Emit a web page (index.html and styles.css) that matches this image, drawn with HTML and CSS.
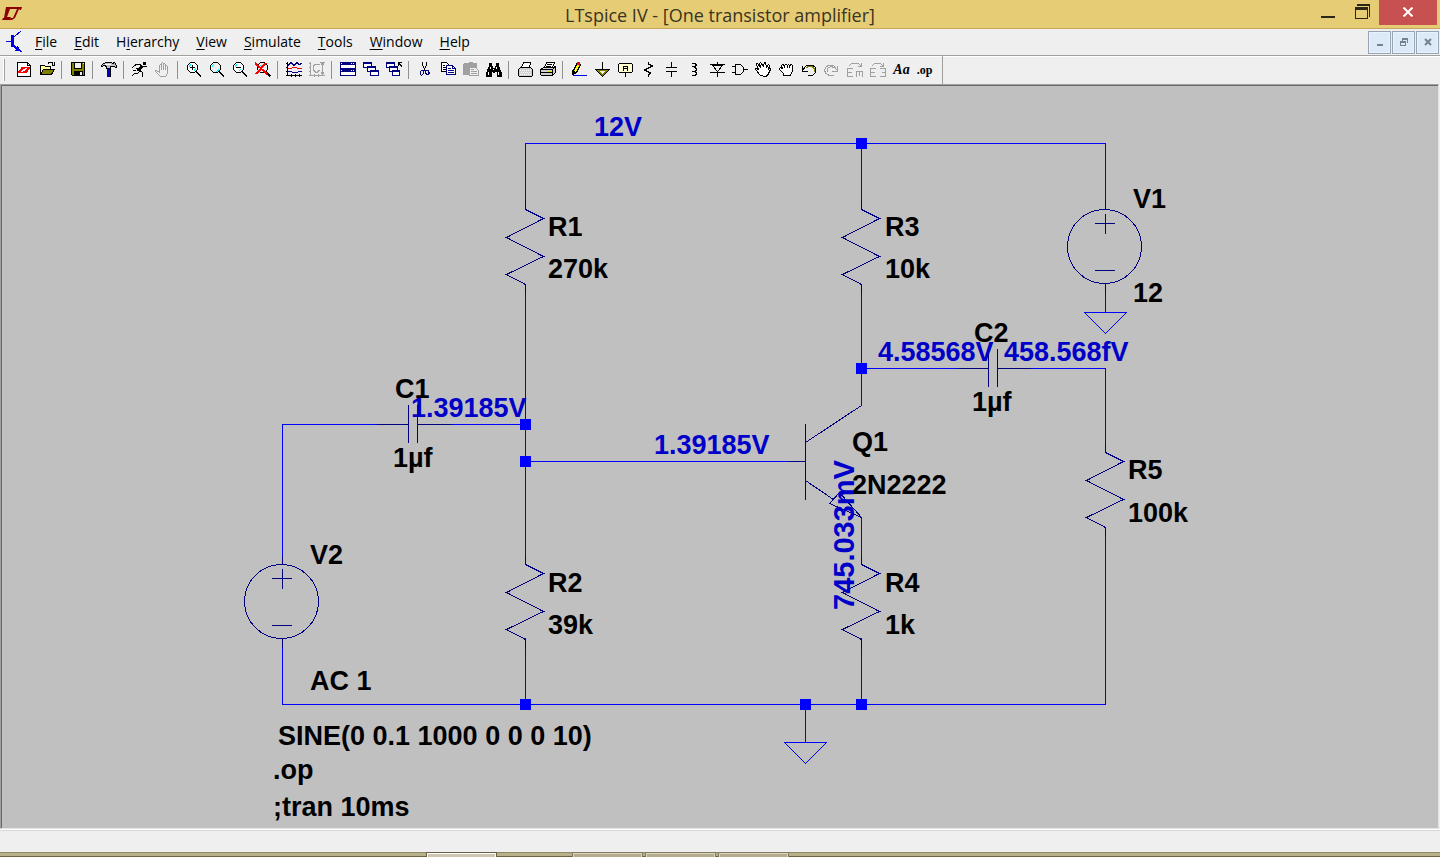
FILE: index.html
```html
<!DOCTYPE html>
<html lang="en">
<head>
<meta charset="utf-8">
<title>LTspice IV - [One transistor amplifier]</title>
<link rel="stylesheet" href="styles.css">
</head>
<body>
<div class="window">
  <header class="titlebar">
    <svg class="app-logo" width="20" height="13" viewBox="0 0 20 13"><path fill="#8b0000" d="M4 0h8l-1 2H8L5 10h4l-1 3H0l1-2h1zM12 0h8l-1 3h-1l-1-1-4 9-3 2H8l1-2h2l4-9h-4z"/></svg>
    <h1 class="title">LTspice IV - [One transistor amplifier]</h1>
    <div class="window-controls">
      <button class="win-btn" aria-label="Minimize"><svg class="crisp" width="14" height="16" viewBox="0 0 14 16"><path fill="#2a2618" d="M0 12h14v2H0z"/></svg></button>
      <button class="win-btn" aria-label="Restore"><svg class="crisp" width="15" height="16" viewBox="0 0 15 16"><path fill="#2a2618" d="M2 0h13v13h-1V2H2zM0 3h13v12H0zM1 6v8h11V6z" fill-rule="evenodd"/></svg></button>
      <button class="win-btn close" aria-label="Close"><svg width="12" height="10" viewBox="0 0 12 10"><path stroke="#fff" stroke-width="2" d="M1.500.5l9 9M10.500.5l-9 9"/></svg></button>
    </div>
  </header>

  <nav class="menubar">
    <svg class="doc-icon crisp" width="16" height="22" viewBox="0 0 16 22"><path fill="none" stroke="#0000e0" d="M0 10.500h6M8 6l7-6"/><path fill="#0000e0" d="M5 4h3v12H5zM7 13l4 3 1-2 1 3 3 4-5-1-2 0 1-2-3-2z"/></svg>
    <button class="menu"><u>F</u>ile</button>
    <button class="menu"><u>E</u>dit</button>
    <button class="menu">H<u>i</u>erarchy</button>
    <button class="menu"><u>V</u>iew</button>
    <button class="menu"><u>S</u>imulate</button>
    <button class="menu"><u>T</u>ools</button>
    <button class="menu"><u>W</u>indow</button>
    <button class="menu"><u>H</u>elp</button>
    <div class="doc-controls">
      <button class="doc-btn" aria-label="Minimize document"><svg class="crisp" width="8" height="9" viewBox="0 0 8 9"><path fill="#74828f" d="M1 6h6v2H1z"/></svg></button>
      <button class="doc-btn" aria-label="Restore document"><svg class="crisp" width="8" height="9" viewBox="0 0 8 9"><path fill="#74828f" fill-rule="evenodd" d="M2 0h6v5H7V2H3v1H2zM0 3h6v5H0zM1 5v2h4V5z"/></svg></button>
      <button class="doc-btn" aria-label="Close document"><svg width="8" height="9" viewBox="0 0 8 9"><path stroke="#74828f" stroke-width="2" d="M1 1l6 6M7 1L1 7"/></svg></button>
    </div>
  </nav>

  <div class="toolbar" role="toolbar" aria-label="Schematic tools">
    <span class="grip"></span>
    <div class="group">
      <button class="tool" aria-label="New schematic"><svg viewBox="0 0 16 16"><path fill="#fff" stroke="#000" d="M1.500.5h10l3 3v11h-13z"/><path fill="none" stroke="#000" d="M11.500.5v3h3"/><path fill="#f00" d="M5 5h4v2H7l-2 3h2v1H2V9h1l2-3zM9 5h5v2h-1l-2 4H7V9h2l2-3H9z"/></svg></button>
      <button class="tool" aria-label="Open"><svg viewBox="0 0 16 16"><path fill="#ff9" stroke="#000" d="M1.500 12.500v-9h4l1 1h5v3h-6z"/><path fill="#808000" stroke="#000" d="M1.500 12.500l3-5h11l-3 5z"/><path fill="none" stroke="#000" d="M9 1.500l1-1h3l1 2M15.500 0v3h-3"/></svg></button>
    </div>
    <span class="sep"></span>
    <div class="group">
      <button class="tool" aria-label="Save"><svg viewBox="0 0 16 16"><path fill="#808000" stroke="#000" d="M1.500.5h13v13h-12l-1-1z"/><path fill="#efefef" stroke="#000" d="M4.500.5h7v6h-7z"/><path d="M4 9h9v5H4z"/><path fill="#efefef" d="M10 10h2v3h-2zM13 1h1v1h-1z"/></svg></button>
    </div>
    <span class="sep"></span>
    <div class="group">
      <button class="tool" aria-label="Control panel"><svg viewBox="0 0 16 16"><path fill="#c0c0c0" stroke="#000" d="M.5 3.500l2-2 3-1h5l1 1 2-1 2 3v2l-3-1h-3v2h-4v-2l-2-1-3 1z"/><path fill="#fff" d="M4 2h6v1H4z"/><path fill="#0000c0" d="M6 7h4v8H6z"/><path d="M9 7h1v8H9z"/></svg></button>
    </div>
    <span class="sep"></span>
    <div class="group">
      <button class="tool" aria-label="Run"><svg viewBox="0 0 16 16"><path d="M11 0h3v3h-3z"/><path fill="none" stroke="#000" d="M3 3.500l1-1h4l3 2 3-.5h1M0 5.500l3-2M0 14l3-3h3l3-3M7 8l3 2v4h1M1 8.500h3M4 6.500h2"/><path stroke="#000" stroke-width="3" d="M10 4L6 9"/></svg></button>
      <button class="tool" aria-label="Halt" disabled><svg viewBox="0 0 16 16"><path fill="#efefef" stroke="#a0a0a0" d="M5.500 14.500l-5-5v-1h1l3 2v-7l1-1 1 1v-2l1-1 1 1v1l1-1 1 1v2l1-1 1 1v7l-2 3zM6.500 3v5M8.500 2v6M10.500 4v4"/></svg></button>
    </div>
    <span class="sep"></span>
    <div class="group">
      <button class="tool" aria-label="Zoom in"><svg viewBox="0 0 16 16"><path fill="#fff" stroke="#000" d="M4.500.5h4l3 3v4l-3 3h-4l-3-3v-4z"/><path fill="none" stroke="#0ff" d="M3 4.500l2-2M8 8.500l2-2"/><path fill="none" stroke="#000" d="M4 5.500h5M6.500 3v5"/><path stroke="#000" stroke-width="2" d="M10 9.500l5 5"/></svg></button>
      <button class="tool" aria-label="Pan"><svg viewBox="0 0 16 16"><path fill="#efefef" stroke="#000" d="M4.500.5h4l3 3v4l-3 3h-4l-3-3v-4z"/><path fill="none" stroke="#0ff" d="M3.500 5V3.500L5 2.500M7 9.500l2-1V7"/><path stroke="#000" stroke-width="2" d="M10 9.500l5 5"/></svg></button>
      <button class="tool" aria-label="Zoom out"><svg viewBox="0 0 16 16"><path fill="#fff" stroke="#000" d="M4.500.5h4l3 3v4l-3 3h-4l-3-3v-4z"/><path fill="none" stroke="#0ff" d="M3 4.500l2-2M7 8.500l2-1"/><path fill="none" stroke="#000" d="M4 5.500h5"/><path stroke="#000" stroke-width="2" d="M10 9.500l5 5"/></svg></button>
      <button class="tool" aria-label="Zoom to fit"><svg viewBox="0 0 16 16"><path fill="#efefef" stroke="#000" d="M5.500.5h4l3 3v4l-3 3h-4l-3-3v-4z"/><path fill="none" stroke="#0ff" d="M5 3.500h3M8 8.500h2"/><path stroke="#000" stroke-width="2" d="M10.500 9.500l5 5"/><path fill="none" stroke="#f00" stroke-width="2" d="M0 1l12 11M11 1L1 12"/></svg></button>
    </div>
    <span class="sep"></span>
    <div class="group">
      <button class="tool" aria-label="Autorange"><svg viewBox="0 0 16 16"><path fill="none" stroke="#000" d="M1.500 0v14M0 13.500h16M0 1.500h2M0 5.500h2M0 9.500h2M5.500 12v3M9.500 12v3M13.500 12v3"/><path fill="none" stroke="#000080" d="M2 3.500l3-3 3 3 3-3 2 2 3-1M2 9.500h3l2 1h4l2-1h3"/><path fill="none" stroke="#f00" d="M2 6.500h3l2-1h3l2 1h4"/></svg></button>
      <button class="tool" aria-label="Plot settings" disabled><svg viewBox="0 0 16 16"><path fill="none" stroke="#a0a0a0" d="M1.500 0v14M0 13.500h16M0 1.500h2M0 5.500h2M0 9.500h2M5.500 12v3M9.500 12v3M13.500 0v12M12 2.500l1.500-2 1.500 2M12 10.500l1.500 2 1.500-2M11 .5h5M10.500 3l-2-1h-2l-2 2v4l2 2h2l2-2"/></svg></button>
    </div>
    <span class="sep"></span>
    <div class="group">
      <button class="tool" aria-label="Tile windows"><svg viewBox="0 0 16 16"><path fill="#fff" stroke="#000080" d="M.5.5h15v6H.5zM.5 7.500h15v6H.5z"/><path fill="#000080" d="M0 0h16v3H0zM0 7h16v3H0z"/><path fill="#fff" d="M1 1h1v1H1zM11 1h1v1h-1zM13 1h1v1h-1zM1 8h1v1H1zM11 8h1v1h-1zM13 8h1v1h-1z"/></svg></button>
      <button class="tool" aria-label="Cascade windows"><svg viewBox="0 0 16 16"><g fill="#fff" stroke="#000080"><path d="M.5.5h8v5h-8z"/><path d="M4.500 4.500h8v5h-8z"/><path d="M7.500 8.500h8v5h-8z"/></g><path fill="#000080" d="M0 0h9v2H0zM4 4h9v2H4zM7 8h9v2H7z"/></svg></button>
      <button class="tool" aria-label="Close all windows"><svg viewBox="0 0 16 16"><g fill="#fff" stroke="#000080"><path d="M.5.5h8v5h-8z"/><path d="M3.500 4.500h8v5h-8z"/><path d="M6.500 8.500h7v5h-7z"/></g><path fill="#000080" d="M0 0h9v2H0zM3 4h9v2H3zM6 8h8v2H6z"/><path fill="none" stroke="#000" d="M12.500 4V.5H16M13 1l3 4"/></svg></button>
    </div>
    <span class="sep"></span>
    <div class="group">
      <button class="tool" aria-label="Cut"><svg viewBox="0 0 16 16"><path fill="none" stroke="#000" d="M5.500 0v3l3 6M9.500 0v3l-3 6"/><path fill="none" stroke="#000080" d="M7 8.500l-1-.5-2 1-1 1v2l1 1h1l1-1zM8 8.500l1 0 2 0 1 2v1l-1 1h-1l-1-1z"/></svg></button>
      <button class="tool" aria-label="Copy"><svg viewBox="0 0 16 16"><path fill="#fff" stroke="#000" d="M1.500.5h5l2 2v7h-7z"/><path stroke="#000" d="M3 3.500h2M3 5.500h4M3 7.500h4"/><path fill="#fff" stroke="#000080" d="M6.500 3.500h6l3 3v6h-9z"/><path fill="none" stroke="#000080" d="M12.500 3.500v3h3M8 6.500h3M8 8.500h6M8 10.500h6"/></svg></button>
      <button class="tool" aria-label="Paste" disabled><svg viewBox="0 0 16 16"><path fill="#a0a0a0" d="M1 1h4l1-1h3l1 1h4v5H6v7H0V2z"/><path fill="#efefef" stroke="#a0a0a0" d="M6.500 5.500h6l3 3v5h-9z"/><path stroke="#a0a0a0" d="M8 7.500h3M8 9.500h6M8 11.500h6"/></svg></button>
      <button class="tool" aria-label="Find"><svg viewBox="0 0 16 16"><path d="M3 1h3v3h1v2h2V4h1V1h3v3l1 2 1 3 1 2v4h-5v-5H9v1H7v-1H6v5H0v-4l1-2 1-3 1-2z"/><path fill="#fff" d="M4 5h1v2H4zM10 5h1v2h-1zM2 10h1v3H2zM12 10h1v3h-1zM7 7h1v1H7z"/></svg></button>
    </div>
    <span class="sep"></span>
    <div class="group">
      <button class="tool" aria-label="Print setup"><svg viewBox="0 0 16 16"><path fill="#fff" stroke="#000" d="M4.500 5.500l2-5h7l-1 5"/><path fill="#d0d0d0" stroke="#000" d="M1.500 7.500l2-2h10l2 2v6l-1 1h-12l-1-1z"/><path stroke="#fff" stroke-dasharray="1 1" d="M3 8.500h11M4 10.500h10M3 12.500h11"/></svg></button>
      <button class="tool" aria-label="Print"><svg viewBox="0 0 16 16"><path fill="#fff" stroke="#000" d="M4.500 5.500l2-5h8l-2 5"/><path fill="none" stroke="#000" d="M7 2.500h5M6 4.500h5"/><path fill="#d0d0d0" stroke="#000" d="M.5 7.500l3-2h10l2-1v6l-3 3h-11l-1-1z"/><path fill="none" stroke="#000" d="M1 7.500h11l3-2M1 10.500h12M12.500 8v5"/><path stroke="#e0e000" d="M7 9.500h4"/></svg></button>
    </div>
    <span class="sep"></span>
    <div class="group">
      <button class="tool" aria-label="Draw wire"><svg viewBox="0 0 16 16"><path fill="#ff0" stroke="#000" d="M2.500 8.500l4-8 3 2-4 8-3 2z"/><path fill="#f00" d="M6 0h3v4L6 3z"/><path d="M1 8l4 2-3 3H1z"/><path stroke="#00f" d="M2 13.500h14"/></svg></button>
      <button class="tool" aria-label="Ground"><svg viewBox="0 0 16 16"><path fill="none" stroke="#000" d="M8.500 0v8"/><path fill="#efefef" stroke="#808000" stroke-width="2" d="M3 8h11l-5.500 5z"/><path fill="none" stroke="#000" d="M1 7.500h15M2 8l6.500 6.500L15 8"/></svg></button>
      <button class="tool" aria-label="Label net"><svg viewBox="0 0 16 16"><path fill="#ffffd0" stroke="#000" d="M2.500 1.500h12l1 1v7l-1 1h-12l-1-1v-7z"/><path fill="none" stroke="#000" d="M8.500 11v4M6.500 9V5l1-1h2l1 1v4M7 6.500h4"/></svg></button>
      <button class="tool" aria-label="Resistor"><svg viewBox="0 0 16 16"><path fill="none" stroke="#000" d="M8.500 0v2l4 2-8 4 6 3-2 2v2"/></svg></button>
      <button class="tool" aria-label="Capacitor"><svg viewBox="0 0 16 16"><path fill="none" stroke="#000" d="M8.500 0v5M8.500 9v6M3 5.500h11M3 9.500h11"/></svg></button>
      <button class="tool" aria-label="Inductor"><svg viewBox="0 0 16 16"><path fill="none" stroke="#000" d="M6 1.500h3l1 1v1l-1 1H6M8 5.500h1l1 1v2l-1 1H6M9 9.500l1 1v2l-1 1H6"/></svg></button>
      <button class="tool" aria-label="Diode"><svg viewBox="0 0 16 16"><path fill="none" stroke="#000" d="M8.500 0v15M1 2.500h15M1 10.500h15"/><path fill="#efefef" stroke="#000" d="M3.500 3l5 7 5-7z"/></svg></button>
      <button class="tool" aria-label="Component"><svg viewBox="0 0 16 16"><path fill="#efefef" stroke="#000" d="M3.500 2.500h5l3 3v4l-3 3h-5z"/><path stroke="#000" d="M0 4.500h3M0 10.500h3M12 7.500h4"/></svg></button>
      <button class="tool" aria-label="Move"><svg viewBox="0 0 16 16"><path fill="#fff" stroke="#000" d="M5.500 13.500l-5-6v-1h1l2 1-2-5v-1h1l3 4-1-4 1-1 3 4 1-4h1l1 5 2-3 1 1-1 4 1-1h1v1l-3 6-2 1z"/></svg></button>
      <button class="tool" aria-label="Drag"><svg viewBox="0 0 16 16"><path fill="#fff" stroke="#000" d="M5.500 13.500v-2l-4-4v-1l1-1 2 1-1-3 1-1 2 1 1-1h1l1 1 1-1 1 1 2-1 1 1v6l-2 3v1z"/><path fill="none" stroke="#000" d="M6.500 3v3M9.500 3v3M11.500 4v2"/></svg></button>
      <button class="tool" aria-label="Undo"><svg viewBox="0 0 16 16"><path fill="none" stroke="#000" d="M1.500 4v5H7M2 8l3-4 2-1h4l3 2 1 3-1 3-2 2H7"/><path fill="none" stroke="#808000" d="M5 5.500l3-1h3l2 2v3"/></svg></button>
      <button class="tool" aria-label="Redo" disabled><svg viewBox="0 0 16 16"><path fill="none" stroke="#a0a0a0" d="M13.500 4v5H8M13 8l-3-4-2-1H5L2 5 .5 8l1 3 3 2h5M10 5.500l-3-1-4 2v3"/></svg></button>
      <button class="tool" aria-label="Rotate" disabled><svg viewBox="0 0 16 16"><path fill="none" stroke="#a0a0a0" d="M6 6.500H.5v8H6M1 10.500h4M9.500 15v-5.500h6V15M12.500 10v4M2 4l3-3h6l3 3M14.500 1v3.500H11"/></svg></button>
      <button class="tool" aria-label="Mirror" disabled><svg viewBox="0 0 16 16"><path fill="none" stroke="#a0a0a0" d="M6 6.500H.5v8H6M1 10.500h4M10 6.500h5.500v8H10M12 10.500h3M2 4l3-3h5l3 3M13.500 1v3.500H10"/></svg></button>
      <button class="tool text-tool comment" aria-label="Text">Aa</button>
      <button class="tool text-tool" aria-label="SPICE directive">.op</button>
    </div>
    <span class="end-sep"></span>
  </div>

  <main class="canvas">
    <svg class="schematic" viewBox="2 86 1436 742" preserveAspectRatio="xMinYMin meet">
      <defs>
        <path id="resistor" d="M0-9V0L18 9-19 28 18 47-19 65 0 75V84"/>
        <path id="capacitor" d="M-36.500 0H-4.500M-4.500-20V18M4.500-20V18M4.500 0H37.500"/>
        <g id="source"><circle cx="-1" cy="37" r="37"/><path d="M0-9V0M0 74V83M-11 14H9M0 4V24M-11 60.500H9"/></g>
        <path id="ground" d="M-21 0H21L0 21Z"/>
      </defs>
      <g class="wires">
        <path d="M525.500 209V143.500H1105.500V209M861.500 143V209M861.500 284V406M861.500 368.500H989M998 368.500H1105.500V452M1105.500 527V704.500H282.500V638M282.500 564V424.500H408M417 424.500H525M525.500 284V564M525.500 461.500H805M525.500 638V704M861.500 518V564M861.500 638V704M805.500 704V742M1105.500 284V312"/>
        <use href="#ground" x="1105.500" y="312.500"/>
        <use href="#ground" x="805.500" y="742.500"/>
      </g>
      <g class="parts">
        <use href="#resistor" x="525.500" y="209.500"/>
        <use href="#resistor" x="525.500" y="564.500"/>
        <use href="#resistor" x="861.500" y="209.500"/>
        <use href="#resistor" x="861.500" y="564.500"/>
        <use href="#resistor" x="1105.500" y="452.500"/>
        <use href="#capacitor" x="413" y="424.500"/>
        <use href="#capacitor" x="993" y="368.500"/>
        <use href="#source" x="282.500" y="564.500"/>
        <use href="#source" x="1105.500" y="209.500"/>
        <path d="M788 461.500H805M805.500 424V500M805.500 442.500L861.500 405.500M805.500 480.500L833.500 499.500M829.500 503.500L839.500 492.500 861.500 517.500Z"/>
      </g>
      <g class="nodes">
        <path d="M520 419h11v11h-11zM520 456h11v11h-11zM856 138h11v11h-11zM856 363h11v11h-11zM520 699h11v11h-11zM800 699h11v11h-11zM856 699h11v11h-11z"/>
      </g>
      <g class="labels">
        <text x="548" y="236">R1</text><text x="548" y="278">270k</text>
        <text x="548" y="592">R2</text><text x="548" y="634">39k</text>
        <text x="885" y="236">R3</text><text x="885" y="278">10k</text>
        <text x="885" y="592">R4</text><text x="885" y="634">1k</text>
        <text x="1128" y="479">R5</text><text x="1128" y="522">100k</text>
        <text x="395" y="398">C1</text><text x="393" y="467">1µf</text>
        <text x="974" y="342">C2</text><text x="972" y="411">1µf</text>
        <text x="852" y="451">Q1</text><text x="852" y="494">2N2222</text>
        <text x="1133" y="208">V1</text><text x="1133" y="302">12</text>
        <text x="310" y="564">V2</text><text x="310" y="690">AC 1</text>
        <text x="278" y="745">SINE(0 0.1 1000 0 0 0 10)</text>
        <text x="273" y="779">.op</text>
        <text x="273" y="816">;tran 10ms</text>
      </g>
      <g class="labels voltages">
        <text x="594" y="136">12V</text>
        <text x="411" y="417">1.39185V</text>
        <text x="654" y="454">1.39185V</text>
        <text x="878" y="361">4.58568V</text>
        <text x="1004" y="361">458.568fV</text>
        <text class="vertical" transform="translate(854 610) rotate(-90)">745.033mV</text>
      </g>
    </svg>
  </main>
  <footer class="statusbar"></footer>
  <div class="taskbar">
    <span class="task active"></span>
    <span class="task"></span>
    <span class="task"></span>
    <span class="task"></span>
  </div>
</div>
</body>
</html>
```
FILE: styles.css
```css
* { box-sizing: border-box; }
body {
  margin: 0;
  font-family: "Open Sans", "Noto Sans", sans-serif;
  color: #000;
}
button {
  border: 0;
  padding: 0;
  background: none;
  font: inherit;
  color: inherit;
}
svg { display: block; }
.crisp { shape-rendering: crispEdges; }

.window {
  display: flex;
  flex-direction: column;
  min-height: 100vh;
  background: #efefef;
}

.titlebar {
  display: grid;
  grid-template-columns: 1fr auto 1fr;
  align-items: start;
  height: 29px;
  background: #e6cd75;
  border-bottom: 1px solid #c7a65c;
}
.app-logo { margin: 7px 0 0 2px; }
.title {
  margin: 0;
  padding-top: 3px;
  font-size: 18px;
  line-height: 24px;
  font-weight: 400;
  color: #3a3420;
}
.window-controls {
  display: flex;
  justify-self: end;
  padding-right: 3px;
}
.win-btn {
  display: flex;
  justify-content: center;
  padding-top: 4px;
  width: 34px;
  height: 25px;
}
.close {
  width: 58px;
  padding-top: 7px;
  background: #c75050;
}

.menubar {
  display: flex;
  align-items: center;
  height: 27px;
  padding-left: 6px;
  border-bottom: 1px solid #a0a0a0;
  box-shadow: 0 1px #fff;
}
.doc-icon { margin-right: 5px; }
.menu {
  padding: 0 9px 0 8px;
  font-size: 14px;
  line-height: 24px;
}
.menu u { text-underline-offset: 2px; }
.doc-controls {
  display: flex;
  gap: 1px;
  margin-left: auto;
  padding-right: 1px;
}
.doc-btn {
  display: grid;
  place-items: center;
  width: 23px;
  height: 23px;
  border: 1px solid #98a4b4;
  background: #dce9f7;
  box-shadow: inset 0 0 0 1px #e9f3fc;
}

.toolbar {
  display: flex;
  align-items: center;
  height: 28px;
  padding-left: 3px;
}
.grip {
  width: 2px;
  height: 22px;
  margin-right: 8px;
  background: #fff;
  border-right: 1px solid #a0a0a0;
}
.group { display: flex; }
.tool {
  display: grid;
  align-items: center;
  width: 23px;
  height: 22px;
  padding: 0 4px 0 3px;
}
.tool svg {
  width: 16px;
  height: 16px;
  shape-rendering: crispEdges;
}
.text-tool {
  padding: 0;
  place-items: center;
  font: bold 12px "Liberation Serif", serif;
}
.comment { font: italic bold 14px "Liberation Serif", serif; }
.sep {
  width: 1px;
  height: 18px;
  margin: 0 5px 0 2px;
  background: #909090;
}
.end-sep {
  width: 1px;
  height: 28px;
  margin-left: 6px;
  background: #a0a0a0;
}

.canvas {
  flex: 1;
  margin-right: 1px;
  border: 1px solid #a0a0a0;
  border-right-color: #e3e3e3;
  border-bottom-color: #e3e3e3;
  box-shadow: inset 1px 1px #696969;
  background: #c0c0c0;
  padding: 1px 0 0 1px;
}
.schematic { width: 100%; }
.wires, .parts {
  fill: none;
  stroke: #00f;
  shape-rendering: crispEdges;
}
.parts { stroke: #000080; }
.nodes { fill: #00f; }
.labels {
  font: bold 27px "Liberation Sans", Arial, sans-serif;
  fill: #000;
}
.voltages { fill: #0000c8; }
.vertical { font-size: 29px; }

.statusbar {
  height: 23px;
  border-top: 1px solid #fff;
  box-shadow: inset 0 1px #d7d7d7;
}
.taskbar {
  display: flex;
  gap: 2px;
  height: 5px;
  padding-left: 426px;
  overflow: hidden;
  background: linear-gradient(#8d8865 1px, #b8b088 1px, #b8b088 4px, #6f623c 4px);
}
.task {
  width: 71px;
  height: 8px;
  border: 1px solid #7f7b60;
  background: #b4ac8c;
  box-shadow: inset 0 0 0 1px #dad5bc;
}
.active {
  margin-right: 73px;
  border-color: #655f48;
  background: #cdc6b0;
  box-shadow: inset 0 0 0 1px #fff;
}
```
